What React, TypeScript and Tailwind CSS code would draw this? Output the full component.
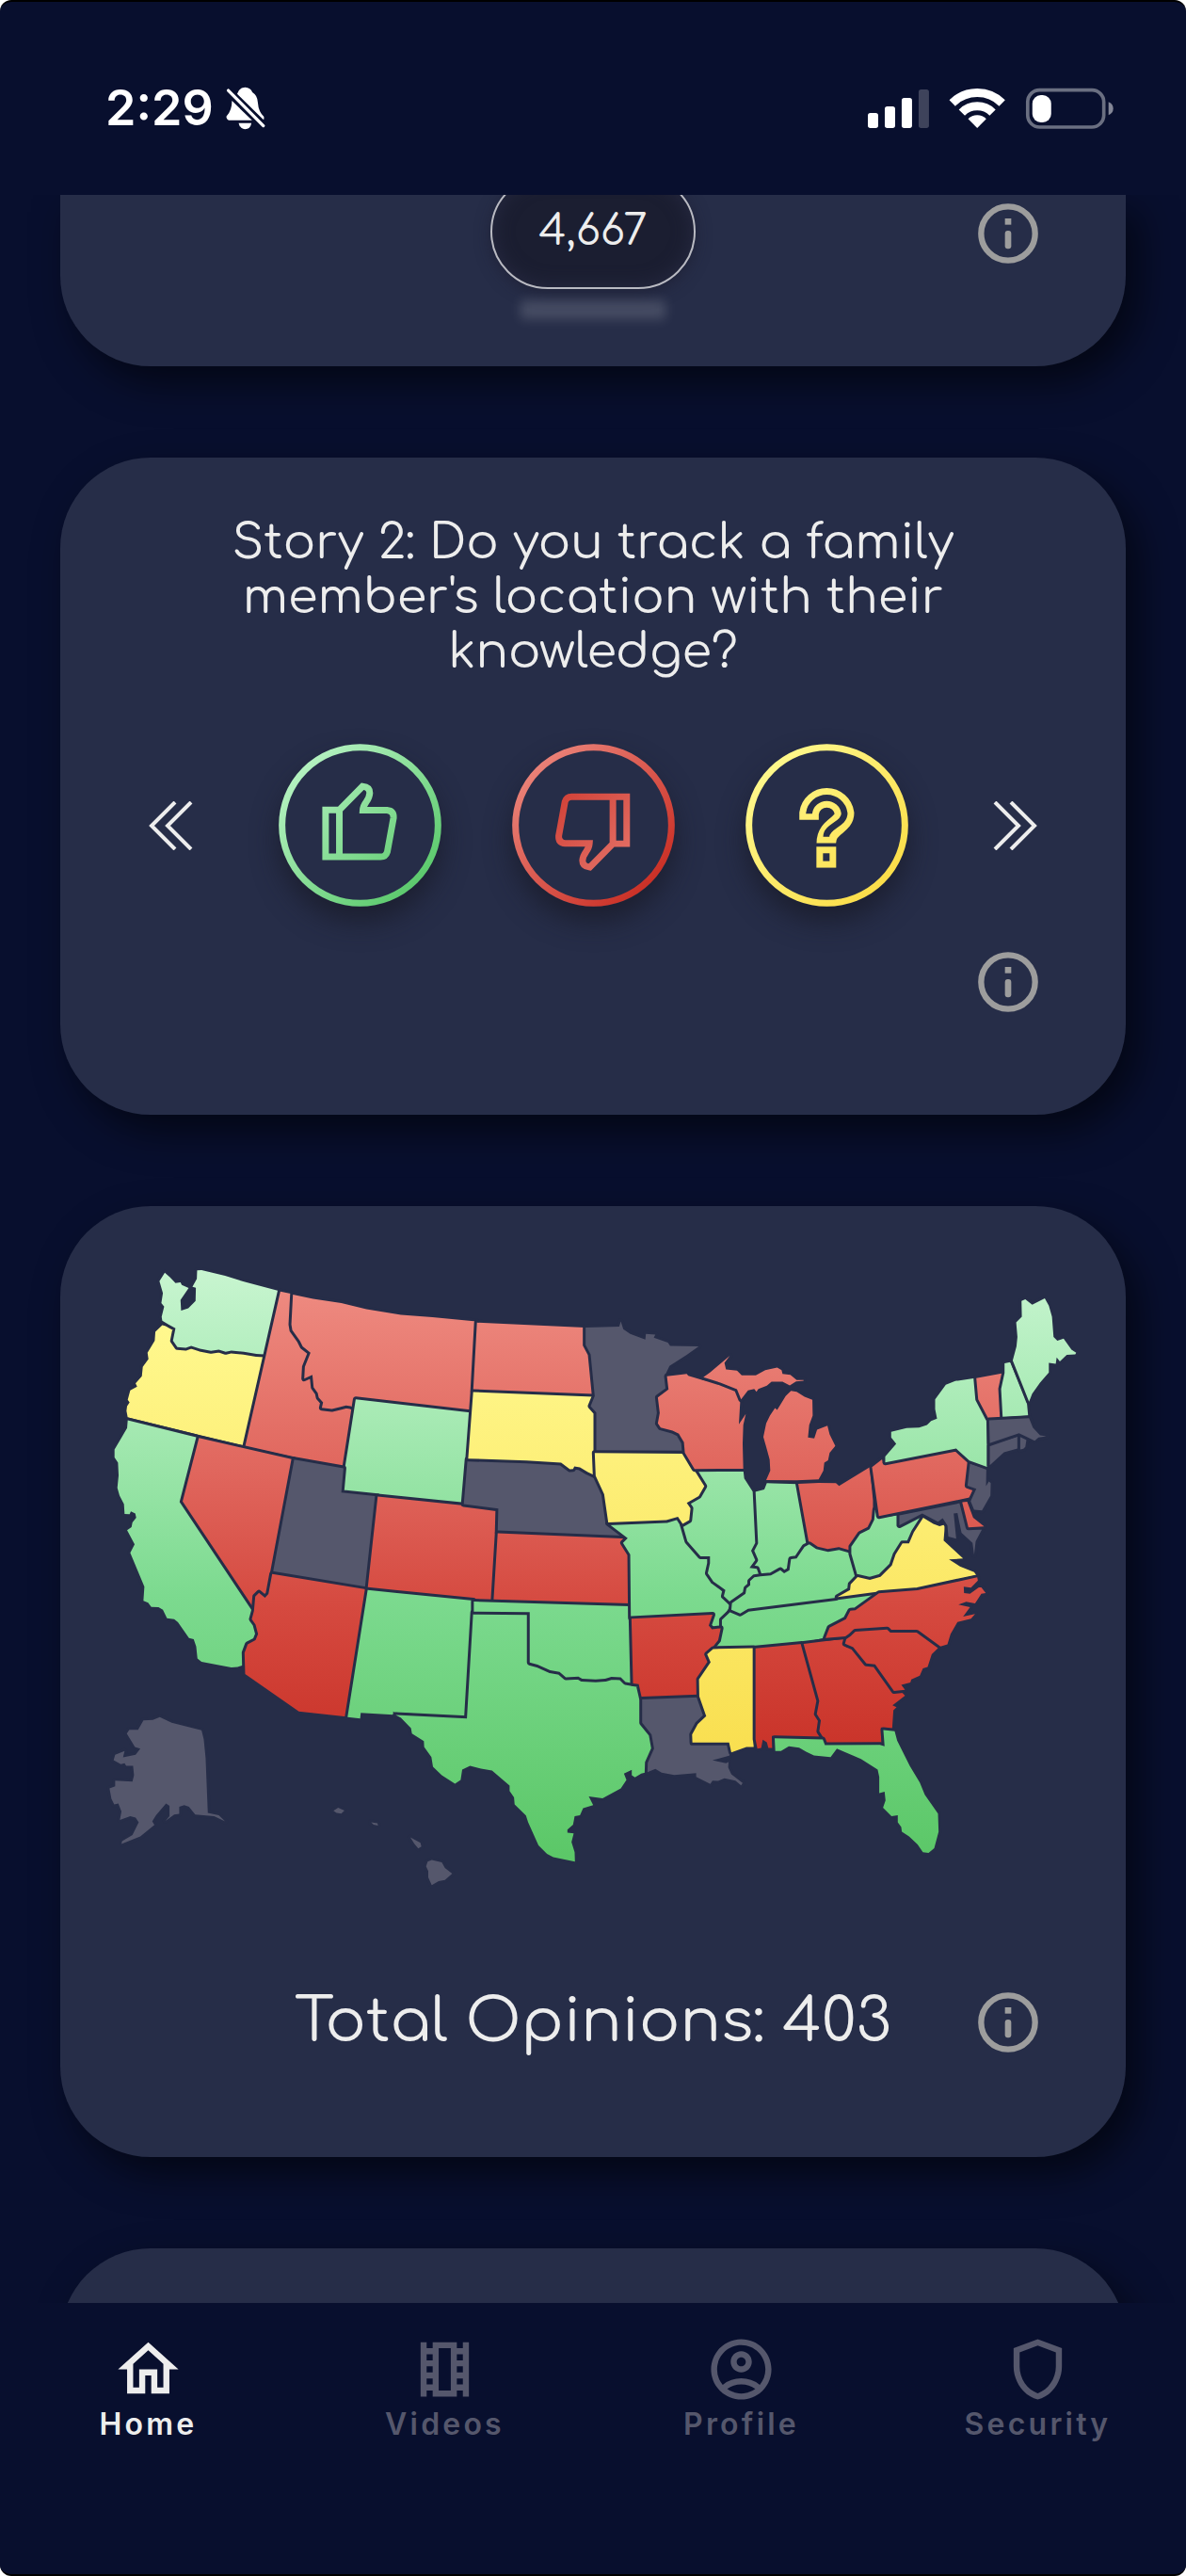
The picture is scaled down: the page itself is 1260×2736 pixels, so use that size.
import type { ReactNode } from 'react'
import { MdOutlineAccountCircle, MdOutlineHome, MdOutlineShield, MdOutlineTheaters } from 'react-icons/md'
import clsx from 'clsx'

type Opinion = 'yes' | 'no' | 'unsure' | 'none'

interface StateShape {
  id: string
  opinion: Opinion
  d: string
}

const fills: Record<Opinion, string> = {
  yes: 'url(#map-yes)',
  no: 'url(#map-no)',
  unsure: 'url(#map-unsure)',
  none: '#55576c',
}

// Later states are painted over the borders of earlier ones, so the order matters.
const states: StateShape[] = [
  { id: 'OR', opinion: 'unsure', d: 'M220 262 260 272 252 312 266 338 300 330 545 358 480 646 110 556 106 535 108 520 116 508 110 500 118 470 140 458 135 447 155 425 158 395 176 370 173 350 196 312 198 283Z' },
  { id: 'WA', opinion: 'yes', d: 'M228 95 245 110 262 128 278 126 282 134 304 144 278 182 280 216 303 208 326 185 327 143 316 140 330 115 331 88 345 87 420 105 480 124 590 153 545 355 520 354 480 347 440 343 422 347 400 340 375 344 340 337 312 328 295 334 268 332 254 312 262 272 240 260 220 248 218 235 226 203 217 192 222 160 211 122Z' },
  { id: 'ID', opinion: 'no', d: 'M596 155 636 163 632 275 665 330 690 350 670 432 698 420 705 460 728 525 830 525 797 716 484 648Z' },
  { id: 'MT', opinion: 'no', d: 'M636 165 700 178 790 192 870 211 980 229 1080 237 1220 250 1208 470 1200 538 1020 520 835 495 830 525 820 520 805 518 785 523 760 529 728 525 732 508 718 492 715 478 702 460 698 420 672 432 674 395 692 350 667 330 658 312 634 278 631 260Z' },
  { id: 'WY', opinion: 'yes', d: 'M836 498 1200 540 1178 832 905 805 790 792Z' },
  { id: 'NV', opinion: 'no', d: 'M330 620 638 690 570 1050 558 1118 547 1130 528 1114 514 1126 508 1172 277 825Z' },
  { id: 'UT', opinion: 'none', d: 'M640 690 797 718 790 795 905 807 872 1102 572 1052Z' },
  { id: 'CA', opinion: 'yes', d: 'M110 565 328 619 275 825 506 1172 501 1198 513 1215 521 1245 513 1265 488 1278 477 1305 476 1345 460 1350 440 1352 400 1344 345 1334 332 1323 328 1285 320 1262 305 1258 270 1208 258 1198 235 1195 222 1168 208 1160 185 1159 175 1146 160 1140 163 1095 118 987 132 960 108 915 122 905 125 890 137 875 134 862 120 855 116 864 100 863 98 832 84 805 77 780 81 740 79 700 68 683 68 658 108 590Z' },
  { id: 'AZ', opinion: 'no', d: 'M570 1054 872 1104 806 1508 655 1492 484 1373 482 1305 492 1278 517 1265 525 1245 517 1215 505 1198 512 1172 516 1126 528 1114 547 1130 558 1118Z' },
  { id: 'CO', opinion: 'no', d: 'M906 808 1290 847 1275 1020 1272 1137 1210 1137 960 1112 874 1101Z' },
  { id: 'NM', opinion: 'yes', d: 'M874 1105 960 1114 1210 1139 1188 1510 960 1495 955 1492 956 1502 852 1496 850 1514 810 1510Z' },
  { id: 'ND', opinion: 'no', d: 'M1222 254 1565 270 1568 325 1582 355 1582 395 1594 488 1210 472Z' },
  { id: 'NE', opinion: 'none', d: 'M1192 690 1490 700 1597 742 1620 775 1634 888 1700 940 1288 922 1290 846 1180 832Z' },
  { id: 'SD', opinion: 'unsure', d: 'M1210 475 1592 490 1585 525 1600 545 1600 664 1592 668 1597 740 1575 730 1550 715 1532 712 1528 720 1518 721 1490 700 1380 693 1194 687Z' },
  { id: 'KS', opinion: 'no', d: 'M1288 925 1700 942 1685 955 1708 992 1708 1153 1275 1137Z' },
  { id: 'TX', opinion: 'yes', d: 'M1210 1177 1388 1178 1388 1320 1500 1340 1600 1360 1700 1385 1717 1405 1737 1407 1745 1450 1745 1528 1775 1565 1783 1610 1763 1655 1762 1685 1745 1690 1725 1702 1715 1695 1715 1678 1690 1690 1698 1710 1680 1737 1622 1768 1578 1762 1592 1790 1560 1800 1550 1822 1533 1825 1528 1852 1510 1868 1510 1878 1530 1880 1523 1908 1533 1940 1534 1970 1465 1956 1445 1945 1418 1918 1385 1845 1378 1823 1342 1788 1340 1765 1326 1745 1326 1728 1270 1680 1235 1674 1200 1665 1175 1677 1170 1710 1152 1722 1110 1695 1082 1668 1077 1637 1054 1605 1053 1586 1015 1562 1012 1545 980 1512 963 1503 1190 1514Z' },
  { id: 'OK', opinion: 'yes', d: 'M1212 1142 1708 1157 1710 1210 1717 1402 1695 1398 1680 1383 1650 1382 1630 1388 1600 1390 1557 1388 1545 1381 1505 1383 1485 1366 1455 1361 1415 1343 1390 1336 1390 1176 1212 1174Z' },
  { id: 'MN', opinion: 'none', d: 'M1568 270 1675 267 1680 250 1688 275 1710 290 1758 308 1760 290 1790 292 1785 302 1830 318 1837 328 1928 330 1890 357 1835 392 1823 417 1827 467 1796 490 1802 542 1796 575 1805 590 1845 600 1863 610 1880 638 1882 668 1602 665 1602 540 1584 520 1597 488 1584 355 1568 325Z' },
  { id: 'MO', opinion: 'yes', d: 'M1640 893 1860 875 1877 900 1895 960 1960 1010 1960 1055 2032 1147 2020 1170 2000 1200 2000 1225 1970 1228 1960 1218 1975 1180 1712 1193 1710 992 1687 955 1702 940Z' },
  { id: 'IN', opinion: 'yes', d: 'M2102 794 2137 785 2145 765 2243 768 2277 958 2240 1003 2220 1045 2123 1060 2115 1038 2092 1035 2110 1010 2097 980 2110 955Z' },
  { id: 'IL', opinion: 'yes', d: 'M1915 725 2070 724 2073 750 2100 792 2108 955 2095 980 2108 1010 2090 1035 2113 1038 2121 1060 2090 1072 2075 1118 2032 1147 2008 1125 2013 1105 1975 1078 1957 1052 1964 1020 1964 998 1934 998 1892 950 1877 898 1904 845 1890 828 1948 775Z' },
  { id: 'IA', opinion: 'unsure', d: 'M1597 669 1882 671 1913 722 1946 775 1928 806 1890 828 1902 845 1898 883 1877 895 1862 872 1825 883 1640 890 1627 800 1600 742Z' },
  { id: 'WI', opinion: 'no', d: 'M1827 425 1890 417 1895 423 1935 435 1995 448 2045 470 2060 508 2056 578 2078 545 2070 580 2068 640 2070 719 1915 720 1884 668 1881 635 1865 608 1845 598 1807 588 1798 575 1804 542 1798 492 1832 467Z' },
  { id: 'MI', opinion: 'no', d: 'M1943 428 1965 412 2027 360 2010 382 2015 403 2050 407 2065 422 2110 422 2140 405 2178 397 2192 405 2195 417 2220 420 2240 437 2262 437 2262 439 2238 441 2218 454 2195 442 2160 442 2145 455 2118 465 2112 474 2105 465 2085 470 2063 498 2050 466 1997 445ZM2222 471 2240 474 2265 490 2290 500 2291 550 2280 580 2276 620 2296 623 2305 595 2338 582 2345 610 2363 647 2345 668 2340 692 2328 700 2325 725 2310 753 2240 756 2143 755 2156 725 2154 690 2143 650 2134 618 2143 575 2155 550 2171 526 2178 532 2205 488Z' },
  { id: 'OH', opinion: 'no', d: 'M2245 767 2310 764 2365 765 2375 774 2473 714 2483 820 2483 880 2470 908 2440 923 2412 963 2408 983 2375 974 2340 980 2302 971 2279 956Z' },
  { id: 'TN', opinion: 'yes', d: 'M2032 1172 2060 1184 2085 1169 2365 1135 2500 1116 2425 1167 2408 1168 2395 1195 2342 1222 2328 1258 2258 1272 2105 1286 1980 1288 1994 1265 2002 1225 2002 1200Z' },
  { id: 'KY', opinion: 'yes', d: 'M2034 1147 2077 1117 2080 1100 2092 1090 2092 1077 2105 1065 2125 1062 2158 1059 2188 1042 2200 1052 2217 1042 2222 1007 2240 1005 2265 968 2280 960 2302 975 2340 984 2375 978 2406 987 2430 1060 2410 1083 2408 1103 2365 1130 2085 1165 2060 1180 2032 1168Z' },
  { id: 'WV', opinion: 'yes', d: 'M2490 850 2498 877 2563 867 2565 900 2638 870 2610 920 2595 955 2575 955 2552 990 2540 1025 2505 1060 2473 1070 2434 1060 2414 990 2414 967 2442 927 2472 912 2487 882Z' },
  { id: 'VA', opinion: 'unsure', d: 'M2643 875 2675 895 2695 902 2712 897 2708 948 2770 1005 2725 1008 2760 1030 2805 1048 2812 1058 2620 1100 2505 1110 2370 1128 2410 1105 2412 1087 2434 1064 2473 1073 2507 1063 2543 1027 2555 992 2577 957 2598 957 2613 922Z' },
  { id: 'MD', opinion: 'none', d: 'M2567 868 2760 829 2785 912 2830 913 2810 950 2805 993 2800 955 2765 923 2758 890 2752 860 2740 862 2748 942 2723 935 2720 900 2705 877 2690 888 2640 862 2567 899Z' },
  { id: 'DE', opinion: 'no', d: 'M2767 826 2783 824 2802 875 2837 903 2787 906Z' },
  { id: 'PA', opinion: 'no', d: 'M2480 714 2512 689 2518 704 2748 662 2788 698 2780 775 2806 783 2790 811 2502 870Z' },
  { id: 'NJ', opinion: 'none', d: 'M2792 703 2844 720 2843 775 2852 760 2858 765 2857 805 2830 852 2805 850 2794 823 2812 783 2784 773Z' },
  { id: 'NY', opinion: 'yes', d: 'M2522 699 2522 680 2557 640 2541 620 2541 602 2590 590 2630 588 2655 580 2668 567 2687 560 2681 530 2681 498 2715 452 2745 440 2808 431 2813 498 2846 560 2846 713 2790 693 2748 655Z' },
  { id: 'VT', opinion: 'no', d: 'M2812 431 2897 415 2885 465 2891 556 2850 559 2818 498Z' },
  { id: 'NH', opinion: 'yes', d: 'M2902 384 2920 380 2973 508 2977 550 2896 555 2891 465 2902 414Z' },
  { id: 'ME', opinion: 'yes', d: 'M2928 375 2940 330 2943 300 2939 253 2957 235 2956 185 2968 180 2990 197 3030 177 3043 200 3053 235 3058 300 3070 312 3090 305 3115 340 3130 350 3127 355 3100 357 3078 378 3068 365 3065 385 3043 382 3043 413 3015 445 2990 480 2980 506Z' },
  { id: 'CT', opinion: 'none', d: 'M2855 645 2943 617 2943 655 2900 667 2855 708Z' },
  { id: 'RI', opinion: 'none', d: 'M2952 615 2972 625 2968 650 2962 656 2952 658Z' },
  { id: 'MA', opinion: 'none', d: 'M2853 565 2980 558 2992 588 3015 613 3035 616 3010 620 2998 630 2948 606 2855 638Z' },
  { id: 'AR', opinion: 'no', d: 'M1714 1197 1972 1184 1960 1218 1970 1230 1998 1227 1990 1265 1970 1290 1950 1310 1961 1335 1923 1390 1925 1442 1747 1449 1737 1405 1719 1403Z' },
  { id: 'LA', opinion: 'none', d: 'M1748 1454 1927 1447 1948 1507 1923 1530 1903 1565 1906 1597 2025 1596 2030 1625 2025 1633 1972 1647 2015 1657 2023 1653 2022 1670 2032 1692 2068 1720 2063 1727 2045 1712 2010 1705 1990 1713 1972 1712 1965 1723 1920 1700 1920 1688 1850 1694 1810 1687 1790 1675 1765 1685 1766 1655 1786 1610 1778 1565 1748 1528Z' },
  { id: 'MS', opinion: 'unsure', d: 'M1974 1293 2103 1290 2103 1605 2080 1605 2032 1622 2025 1591 1908 1591 1907 1565 1925 1532 1952 1507 1930 1444 1929 1390 1966 1335 1955 1310Z' },
  { id: 'AL', opinion: 'no', d: 'M2109 1291 2257 1277 2308 1458 2300 1500 2313 1520 2308 1555 2321 1575 2161 1570 2163 1608 2150 1608 2145 1590 2132 1582 2127 1608 2115 1610 2109 1580Z' },
  { id: 'GA', opinion: 'no', d: 'M2262 1277 2395 1260 2390 1277 2400 1288 2418 1290 2460 1342 2488 1345 2548 1430 2570 1426 2585 1442 2545 1472 2558 1478 2548 1488 2544 1547 2508 1543 2511 1592 2330 1592 2325 1575 2312 1555 2317 1520 2304 1500 2312 1458Z' },
  { id: 'NC', opinion: 'no', d: 'M2332 1258 2345 1225 2397 1198 2411 1171 2427 1170 2502 1116 2625 1106 2815 1065 2817 1075 2795 1098 2772 1095 2773 1115 2792 1117 2820 1097 2828 1097 2842 1115 2828 1117 2808 1148 2780 1143 2755 1152 2792 1160 2770 1190 2808 1182 2795 1197 2752 1207 2730 1245 2720 1278 2695 1286 2622 1236 2538 1236 2528 1226 2425 1233 2405 1252Z' },
  { id: 'SC', opinion: 'no', d: 'M2398 1262 2412 1252 2427 1238 2528 1231 2538 1241 2622 1241 2690 1290 2670 1310 2657 1350 2642 1355 2632 1378 2605 1390 2602 1400 2573 1407 2585 1423 2550 1427 2490 1342 2462 1339 2420 1287 2394 1276Z' },
  { id: 'FL', opinion: 'yes', d: 'M2170 1577 2323 1581 2330 1599 2505 1598 2520 1603 2516 1551 2552 1555 2560 1585 2600 1665 2632 1718 2648 1757 2690 1817 2692 1875 2678 1927 2660 1942 2642 1940 2625 1915 2598 1890 2575 1875 2573 1860 2562 1845 2562 1822 2542 1825 2515 1798 2523 1775 2520 1747 2503 1752 2503 1700 2498 1677 2445 1643 2368 1610 2348 1637 2295 1632 2270 1620 2248 1607 2215 1603 2190 1618 2172 1618Z' },
  { id: 'AK', opinion: 'none', d: 'M212 1510 250 1528 345 1552 352 1580 358 1640 365 1815 400 1822 420 1842 385 1825 325 1820 305 1795 290 1790 274 1795 274 1818 258 1820 230 1840 243 1825 243 1792 232 1785 200 1822 188 1842 195 1853 150 1890 90 1914 92 1905 125 1885 145 1845 135 1830 118 1825 85 1837 90 1810 80 1785 67 1788 58 1770 52 1737 70 1730 70 1712 125 1715 130 1695 127 1665 105 1665 100 1657 88 1660 65 1647 70 1630 100 1618 95 1638 135 1630 150 1610 133 1605 107 1562 115 1550 143 1550 160 1520 190 1519Z' },
  { id: 'HI', opinion: 'none', d: 'M765 1808 780 1798 800 1807 790 1817 775 1815ZM885 1845 905 1848 907 1855 893 1852ZM1010 1893 1042 1910 1045 1922 1035 1928 1022 1912ZM1065 1970 1078 1965 1110 1972 1120 1990 1143 2008 1120 2028 1100 2032 1078 2045 1067 2020 1067 2000 1060 1985Z' },
]

const navItems = [
  { label: 'Home', icon: MdOutlineHome, active: true },
  { label: 'Videos', icon: MdOutlineTheaters, active: false },
  { label: 'Profile', icon: MdOutlineAccountCircle, active: false },
  { label: 'Security', icon: MdOutlineShield, active: false },
]

function OpinionMap() {
  return (
    <svg aria-label="Opinions by state" className="w-full" role="img" viewBox="0 0 3183 2100">
      <defs>
        <linearGradient gradientUnits="userSpaceOnUse" id="map-yes" x1="0" x2="0" y1="85" y2="1970">
          <stop offset="0" stopColor="#c8f5d0" />
          <stop offset="0.26" stopColor="#a5e9b2" />
          <stop offset="0.55" stopColor="#7cda8f" />
          <stop offset="1" stopColor="#5bc767" />
        </linearGradient>
        <linearGradient gradientUnits="userSpaceOnUse" id="map-no" x1="0" x2="0" y1="150" y2="1600">
          <stop offset="0" stopColor="#ee8a80" />
          <stop offset="0.4" stopColor="#e0665d" />
          <stop offset="0.7" stopColor="#d5493f" />
          <stop offset="1" stopColor="#ca342a" />
        </linearGradient>
        <linearGradient gradientUnits="userSpaceOnUse" id="map-unsure" x1="0" x2="0" y1="260" y2="1620">
          <stop offset="0" stopColor="#fff88e" />
          <stop offset="1" stopColor="#f9df50" />
        </linearGradient>
      </defs>
      <g stroke="#262d48" strokeLinejoin="round" strokeWidth="18">
        {states.map((state) => (
          <path d={state.d} fill={fills[state.opinion]} key={state.id} style={{ paintOrder: 'stroke' }} />
        ))}
      </g>
    </svg>
  )
}

function InfoButton({ label }: { label: string }) {
  return (
    <button aria-label={label} className="size-16 text-[#9d9d9d]" type="button">
      <svg className="size-full" fill="none" viewBox="0 0 192 192">
        <circle cx="96" cy="96" r="86" stroke="currentColor" strokeWidth="19" />
        <rect fill="currentColor" height="20" width="20" x="86" y="48" />
        <rect fill="currentColor" height="58" rx="9" width="20" x="86" y="87" />
      </svg>
    </button>
  )
}

function VoteButton({ id, label, from, to, children }: { id: string; label: string; from: string; to: string; children: ReactNode }) {
  return (
    <button aria-label={label} className="size-[173px] rounded-full shadow-[0_16px_28px_rgba(24,25,38,0.7)]" type="button">
      <svg className="size-full" fill="none" stroke={`url(#${id})`} strokeWidth="21" viewBox="0 0 520 520">
        <defs>
          <linearGradient gradientUnits="userSpaceOnUse" id={id} x1="70" x2="450" y1="70" y2="450">
            <stop stopColor={from} />
            <stop offset="1" stopColor={to} />
          </linearGradient>
        </defs>
        <circle cx="260" cy="260" r="249" />
        {children}
      </svg>
    </button>
  )
}

function ArrowButton({ label, flipped }: { label: string; flipped?: boolean }) {
  return (
    <button aria-label={label} className={clsx('text-[#ededed]', flipped && 'rotate-180')} type="button">
      <svg className="h-13 w-12" fill="none" stroke="currentColor" strokeWidth="4" viewBox="0 0 48 52">
        <path d="M29 1 4 26l25 25M46 1 21 26l25 25" />
      </svg>
    </button>
  )
}

const thumbPath = 'M150 211H194L268 136Q291 138 291 157Q290 172 280 185Q270 198 269 212H346Q368 214 367 236L347 345Q342 361 326 361H150ZM194 211V361'

function StatusBar() {
  return (
    <header className="flex items-center justify-between pt-[78px] pr-[77px] pb-[57px] pl-28 text-white">
      <div className="flex h-[70px] items-center gap-3">
        <span className="font-[Inter,sans-serif] text-[52px] leading-none font-semibold">2:29</span>
        <svg aria-label="Silent mode" className="h-12 w-11" fill="currentColor" role="img" viewBox="445 95 136 147">
          <path d="M485 121Q492 100 511 100Q529 101 535 116Q552 126 553 150Q555 180 573 196V205H570Z" />
          <path d="M468 144 534 208H457Q448 204 450 195Q468 176 468 144Z" />
          <path d="M490 217H532Q528 237 511 237Q494 237 490 217Z" />
          <path d="M456 110 571 226" stroke="currentColor" strokeLinecap="round" strokeWidth="10" />
        </svg>
      </div>
      <svg aria-label="Signal, Wi-Fi and battery" className="h-11 w-[261px]" fill="white" role="img" viewBox="96 66 784 132">
        <rect height="48" rx="8" width="33" x="96" y="147" />
        <rect height="69" rx="8" width="33" x="150" y="126" />
        <rect height="96" rx="8" width="33" x="204" y="99" />
        <rect height="123" opacity="0.22" rx="8" width="33" x="258" y="72" />
        <g fill="none" stroke="white" strokeWidth="27">
          <path d="M365.5 115.5A112.5 112.5 0 0 1 524.5 115.5" />
          <path d="M395.9 145.9A69.5 69.5 0 0 1 494.1 145.9" />
        </g>
        <path d="M445 195 416 166A41 41 0 0 1 474 166Z" />
        <rect fill="none" height="118" opacity="0.4" rx="38" stroke="white" strokeWidth="11" width="243" x="606" y="74" />
        <rect height="87" rx="27" width="60" x="621" y="90" />
        <path d="M864 112Q879 118 879 133T864 154Z" opacity="0.5" />
      </svg>
    </header>
  )
}

const cardClass = 'bg-[#262d48] shadow-[14px_18px_40px_rgba(0,0,0,0.55)]'

export default function App() {
  return (
    <div className="flex h-screen flex-col overflow-hidden rounded-xl border-y-2 border-black bg-[#080f2e] font-[Comfortaa,Quicksand,Lato,sans-serif] font-normal text-[#ededed]">
      <StatusBar />

      <main className="flex min-h-0 flex-1 flex-col gap-[97px] overflow-y-auto px-16 [scrollbar-width:none]">
        <section className={clsx('grid shrink-0 grid-cols-[1fr_auto_1fr] items-start rounded-b-[96px] px-[93px] pb-[82px]', cardClass)}>
          <div className="relative col-start-2 -mt-[22px]">
            <p className="flex h-[122px] w-[218px] items-center justify-center rounded-[61px] border-2 border-[#b9bac2] bg-[#1b1e31] text-[45px] shadow-[inset_0_0_20px_#272a42,0_4px_16px_rgba(28,28,46,0.6)]">4,667</p>
            <div className="absolute inset-x-8 top-full mt-3 h-5 bg-white/15 blur-[6px]" />
          </div>
          <div className="mt-[9px] flex justify-end">
            <InfoButton label="About story 1" />
          </div>
        </section>

        <section className={clsx('shrink-0 rounded-[96px] px-[93px] pt-[62px] pb-[109px]', cardClass)}>
          <h2 className="mx-auto max-w-[800px] text-center text-[51px] leading-[58px]">Story 2: Do you track a family member's location with their knowledge?</h2>
          <div className="mt-[68px] flex items-center justify-between">
            <ArrowButton label="Previous story" />
            <div className="flex gap-[75px]">
              <VoteButton from="#b5f2c1" id="vote-yes" label="Yes" to="#5bc96c">
                <path d={thumbPath} />
              </VoteButton>
              <VoteButton from="#ea8278" id="vote-no" label="No" to="#ca2f25">
                <path d={thumbPath} transform="rotate(180 258 265)" />
              </VoteButton>
              <VoteButton from="#fff88c" id="vote-unsure" label="Not sure" to="#fbdd48">
                <path d="M203 243V222A57 57 0 0 1 316 222C316 262 258 262 258 317" strokeWidth="62" />
                <path d="M203 223V222A57 57 0 0 1 316 222C316 258 258 262 258 297" stroke="#262d48" strokeWidth="20" />
                <rect height="46" width="42" x="237" y="339" />
              </VoteButton>
            </div>
            <ArrowButton flipped label="Next story" />
          </div>
          <div className="mt-12 flex justify-end">
            <InfoButton label="About story 2" />
          </div>
        </section>

        <section className={clsx('shrink-0 rounded-[96px] px-[35px] pt-[39px] pb-[110px]', cardClass)}>
          <OpinionMap />
          <div className="mt-[94px] grid grid-cols-[1fr_auto_1fr] items-center px-[58px]">
            <p className="col-start-2 text-[64px] leading-[66px]">Total Opinions: 403</p>
            <div className="flex justify-end">
              <InfoButton label="About total opinions" />
            </div>
          </div>
        </section>

        <section className={clsx('h-60 shrink-0 rounded-[96px]', cardClass)} />
      </main>

      <nav className="relative grid grid-cols-4 bg-[#080f2e] pt-8 pb-[139px] font-[Inter,sans-serif]">
        {navItems.map((item) => (
          <a
            aria-current={item.active ? 'page' : undefined}
            className={clsx('flex flex-col items-center', item.active ? 'text-[#ededed]' : 'text-[#55576c]')}
            href={`#${item.label.toLowerCase()}`}
            key={item.label}
          >
            <item.icon className="size-[77px]" />
            <span className="text-[32px] leading-10 font-semibold tracking-widest">{item.label}</span>
          </a>
        ))}
      </nav>
    </div>
  )
}
